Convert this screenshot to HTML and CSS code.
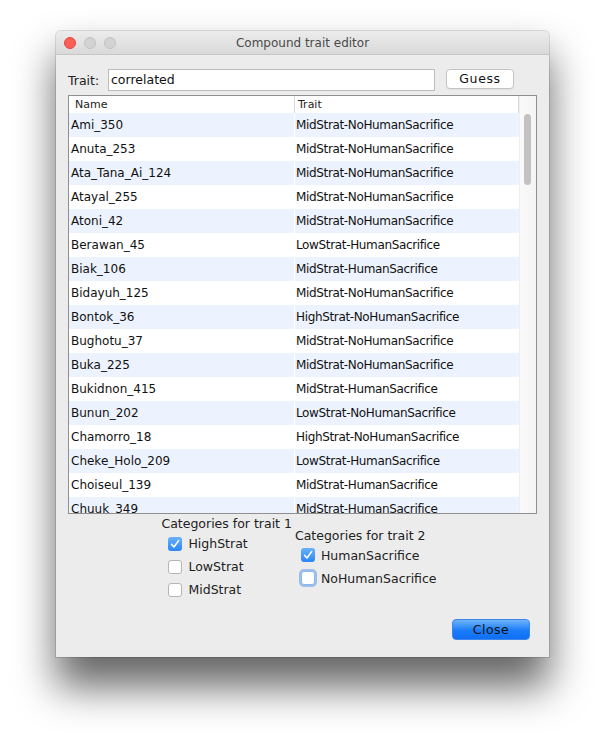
FILE: index.html
```html
<!DOCTYPE html>
<html>
<head>
<meta charset="utf-8">
<link rel="stylesheet" href="styles.css">
</head>
<body>
<div class="stage">
<div class="window">
  <div class="titlebar">
    <div class="lights">
      <span class="light red"></span>
      <span class="light gray"></span>
      <span class="light gray"></span>
    </div>
    <div class="title">Compound trait editor</div>
  </div>
  <div class="content">
    <div class="toprow">
      <span class="label">Trait:</span>
      <div class="field">correlated</div>
      <div class="btn guess">Guess</div>
    </div>
    <div class="table">
      <div class="tmain">
        <div class="thead">
          <div class="hcell name">Name</div>
          <div class="hcell trait">Trait</div>
        </div>
        <div class="tbody">
          <div class="row alt"><div class="cell name">Ami_350</div><div class="cell trait">MidStrat-NoHumanSacrifice</div></div>
          <div class="row"><div class="cell name">Anuta_253</div><div class="cell trait">MidStrat-NoHumanSacrifice</div></div>
          <div class="row alt"><div class="cell name">Ata_Tana_Ai_124</div><div class="cell trait">MidStrat-NoHumanSacrifice</div></div>
          <div class="row"><div class="cell name">Atayal_255</div><div class="cell trait">MidStrat-NoHumanSacrifice</div></div>
          <div class="row alt"><div class="cell name">Atoni_42</div><div class="cell trait">MidStrat-NoHumanSacrifice</div></div>
          <div class="row"><div class="cell name">Berawan_45</div><div class="cell trait">LowStrat-HumanSacrifice</div></div>
          <div class="row alt"><div class="cell name">Biak_106</div><div class="cell trait">MidStrat-HumanSacrifice</div></div>
          <div class="row"><div class="cell name">Bidayuh_125</div><div class="cell trait">MidStrat-NoHumanSacrifice</div></div>
          <div class="row alt"><div class="cell name">Bontok_36</div><div class="cell trait">HighStrat-NoHumanSacrifice</div></div>
          <div class="row"><div class="cell name">Bughotu_37</div><div class="cell trait">MidStrat-NoHumanSacrifice</div></div>
          <div class="row alt"><div class="cell name">Buka_225</div><div class="cell trait">MidStrat-NoHumanSacrifice</div></div>
          <div class="row"><div class="cell name">Bukidnon_415</div><div class="cell trait">MidStrat-HumanSacrifice</div></div>
          <div class="row alt"><div class="cell name">Bunun_202</div><div class="cell trait">LowStrat-NoHumanSacrifice</div></div>
          <div class="row"><div class="cell name">Chamorro_18</div><div class="cell trait">HighStrat-NoHumanSacrifice</div></div>
          <div class="row alt"><div class="cell name">Cheke_Holo_209</div><div class="cell trait">LowStrat-HumanSacrifice</div></div>
          <div class="row"><div class="cell name">Choiseul_139</div><div class="cell trait">MidStrat-HumanSacrifice</div></div>
          <div class="row alt"><div class="cell name">Chuuk_349</div><div class="cell trait">MidStrat-HumanSacrifice</div></div>
        </div>
      </div>
      <div class="scrollbar"><div class="thumb"></div></div>
    </div>
    <div class="groups">
      <div class="group">
        <div class="gtitle">Categories for trait 1</div>
        <div class="check"><span class="box on"><svg viewBox="0 0 14 14" width="14" height="14"><path d="M3.6 7.4 L6 10 L10.6 3.6" fill="none" stroke="#fff" stroke-width="1.6" stroke-linecap="round" stroke-linejoin="round"/></svg></span><span>HighStrat</span></div>
        <div class="check"><span class="box"></span><span>LowStrat</span></div>
        <div class="check"><span class="box"></span><span>MidStrat</span></div>
      </div>
      <div class="group g2">
        <div class="gtitle">Categories for trait 2</div>
        <div class="check"><span class="box on"><svg viewBox="0 0 14 14" width="14" height="14"><path d="M3.6 7.4 L6 10 L10.6 3.6" fill="none" stroke="#fff" stroke-width="1.6" stroke-linecap="round" stroke-linejoin="round"/></svg></span><span>HumanSacrifice</span></div>
        <div class="check"><span class="box focus"></span><span>NoHumanSacrifice</span></div>
      </div>
    </div>
    <div class="footer">
      <div class="btn close">Close</div>
    </div>
  </div>
</div>
</div>
</body>
</html>
```

FILE: styles.css
```css
html, body {
  margin: 0;
  padding: 0;
  background: #ffffff;
}
body {
  font-family: "DejaVu Sans", "Liberation Sans", sans-serif;
  font-size: 12px;
  color: #111;
}
.stage {
  width: 605px;
  height: 737px;
  box-sizing: border-box;
  padding: 31px 0 0 56px;
  position: relative;
  isolation: isolate;
}
.window {
  width: 493px;
  height: 626px;
  background: #ececec;
  border-radius: 5px 5px 0 0;
  box-shadow: 0 0 0 1px rgba(0,0,0,0.12);
  display: flex;
  flex-direction: column;
  position: relative;
}
.window::before {
  content: "";
  position: absolute;
  left: 0;
  right: 0;
  top: 24px;
  bottom: -30px;
  background: rgba(0,0,0,0.6);
  filter: blur(20px);
  z-index: -1;
}
.titlebar {
  height: 23px;
  border-bottom: 1px solid #c6c6c6;
  background: linear-gradient(#ececec, #d9d9d9);
  border-radius: 5px 5px 0 0;
  display: flex;
  align-items: center;
  position: relative;
}
.lights {
  display: flex;
  gap: 8px;
  padding-left: 8px;
}
.light {
  width: 12px;
  height: 12px;
  border-radius: 50%;
  box-sizing: border-box;
}
.light.red {
  background: #fc5f57;
  border: 1px solid #e2463f;
}
.light.gray {
  background: #d3d3d3;
  border: 1px solid #c2c2c2;
}
.title {
  position: absolute;
  left: 0;
  right: 0;
  text-align: center;
  font-size: 12px;
  color: #4a4a4a;
  pointer-events: none;
}
.content {
  flex: 1;
  display: flex;
  flex-direction: column;
  padding: 14px 12px 17px;
}
.toprow {
  display: flex;
  align-items: center;
  height: 22px;
  margin-bottom: 4px;
}
.label {
  width: 40px;
  font-size: 12.5px;
  color: #222;
}
.field {
  width: 327px;
  height: 22px;
  box-sizing: border-box;
  border: 1px solid #bdbdbd;
  background: #fff;
  padding: 0 2px;
  line-height: 20px;
  font-size: 12.5px;
}
.btn {
  box-sizing: border-box;
  text-align: center;
  border-radius: 4px;
  font-size: 12.5px;
}
.guess {
  margin-left: 11px;
  width: 68px;
  height: 20px;
  line-height: 18px;
  background: #fff;
  border: 1px solid #c4c4c4;
  box-shadow: 0 1px 0 rgba(0,0,0,0.05);
  letter-spacing: 0.6px;
  margin-top: -2px;
}
.table {
  height: 419px;
  box-sizing: border-box;
  border: 1px solid #8f8f8f;
  background: #fff;
  display: flex;
  overflow: hidden;
}
.tmain {
  width: 450px;
  display: flex;
  flex-direction: column;
}
.thead {
  height: 17px;
  flex: none;
  display: flex;
  font-size: 11px;
  line-height: 17px;
  color: #222;
}
.hcell {
  box-sizing: border-box;
  border-right: 1px solid #d8d8d8;
}
.hcell.name {
  width: 226px;
  padding-left: 6px;
}
.hcell.trait {
  width: 224px;
  padding-left: 3px;
}
.tbody {
  display: flex;
  flex-direction: column;
}
.row {
  height: 24px;
  flex: none;
  display: flex;
  gap: 1px;
  line-height: 24px;
}
.cell {
  box-sizing: border-box;
  white-space: nowrap;
  overflow: hidden;
}
.cell.name {
  width: 225px;
  padding-left: 2px;
}
.cell.trait {
  width: 224px;
  padding-left: 1px;
  letter-spacing: -0.35px;
}
.row.alt .cell {
  background: #edf3fe;
}
.scrollbar {
  width: 17px;
  border-left: 1px solid #efefef;
  background: linear-gradient(90deg, #fafafa, #f4f4f4);
  box-sizing: border-box;
  padding: 18px 0 0 4px;
}
.thumb {
  width: 7px;
  height: 71px;
  border-radius: 4px;
  background: #c2c2c2;
}
.groups {
  display: flex;
  justify-content: center;
  align-items: center;
  gap: 3px;
  padding-right: 7px;
  padding-top: 1px;
}
.gtitle {
  font-size: 12.5px;
  line-height: 17px;
  color: #222;
  white-space: nowrap;
}
.check {
  height: 23px;
  display: flex;
  align-items: center;
  padding-left: 7px;
  font-size: 12.5px;
  color: #222;
  gap: 6px;
}
.g2 .check {
  padding-left: 6px;
}
.box {
  width: 14px;
  height: 14px;
  box-sizing: border-box;
  border: 1px solid #b5b5b5;
  border-radius: 3px;
  background: #fff;
  display: inline-flex;
}
.box.on {
  border: none;
  background: linear-gradient(#69b1fa, #2c86f7);
}
.box.focus {
  border-color: #8bb7ec;
  box-shadow: 0 0 0 2px rgba(104,160,232,0.6);
}
.footer {
  margin-top: auto;
  display: flex;
  justify-content: flex-end;
  padding-right: 7px;
}
.close {
  width: 78px;
  height: 21px;
  background: linear-gradient(#6eb4fb, #1a7cf9 55%, #0f6ff7);
  border: 1px solid #3b86e6;
  line-height: 19px;
  color: #111;
  letter-spacing: 0.5px;
}
```
